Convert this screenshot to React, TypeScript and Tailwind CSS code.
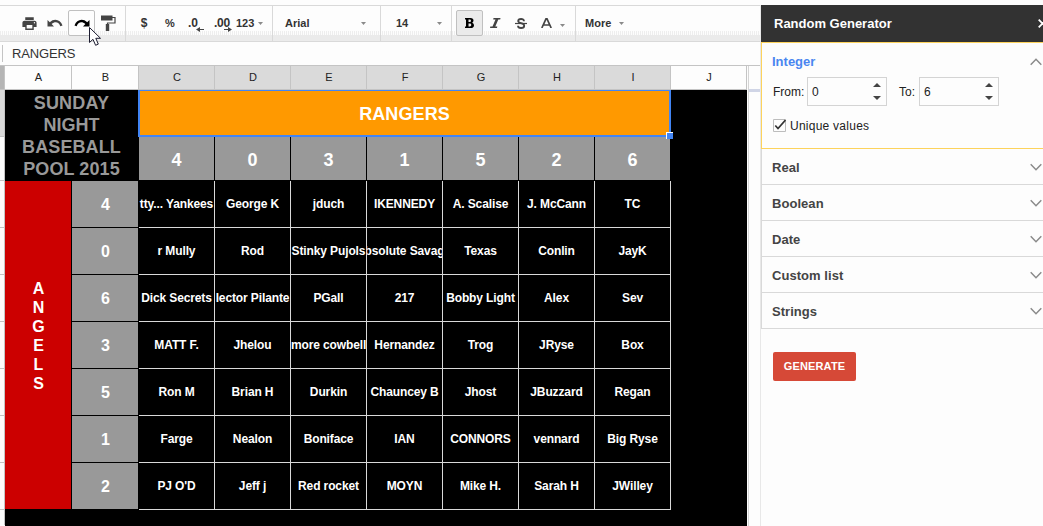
import type { ReactNode } from "react";
import { MdPrint } from "react-icons/md";

const columns = ["C", "D", "E", "F", "G", "H", "I"];
const topDigits = [4, 0, 3, 1, 5, 2, 6];
const rows: { digit: number; names: string[] }[] = [
  { digit: 4, names: ["tty... Yankees", "George K", "jduch", "IKENNEDY", "A. Scalise", "J. McCann", "TC"] },
  { digit: 0, names: ["r Mully", "Rod", "Stinky Pujols", "bsolute Savag", "Texas", "Conlin", "JayK"] },
  { digit: 6, names: ["Dick Secrets", "lector Pilante", "PGall", "217", "Bobby Light", "Alex", "Sev"] },
  { digit: 3, names: ["MATT F.", "Jhelou", "more cowbell", "Hernandez", "Trog", "JRyse", "Box"] },
  { digit: 5, names: ["Ron M", "Brian H", "Durkin", "Chauncey B", "Jhost", "JBuzzard", "Regan"] },
  { digit: 1, names: ["Farge", "Nealon", "Boniface", "IAN", "CONNORS", "vennard", "Big Ryse"] },
  { digit: 2, names: ["PJ O'D", "Jeff j", "Red rocket", "MOYN", "Mike H.", "Sarah H", "JWilley"] },
];

function Caret({ className = "" }: { className?: string }) {
  return (
    <svg className={"shrink-0 " + className} width="5" height="3" viewBox="0 0 5 3">
      <path d="M0 0h5L2.5 3z" fill="#8a8a8a" />
    </svg>
  );
}

function CurvedArrow({ className = "" }: { className?: string }) {
  return (
    <svg className={className} width="16" height="8" viewBox="0 0 16 8">
      <path d="M.5 1v6.500H7L4.600 5C8 2.200 12 3 13.300 7.200L15.500 6.500C13.600.3 7-1.200 2.800 3.200z" fill="currentColor" />
    </svg>
  );
}

function Slot({ children, className = "" }: { children: ReactNode; className?: string }) {
  return <div className={"flex h-[26px] w-[26px] shrink-0 items-center justify-center " + className}>{children}</div>;
}

function Decimals({ label, right }: { label: string; right?: boolean }) {
  return (
    <Slot>
      <span className={right ? "relative text-[12px] tracking-[-0.2px]" : "relative -ml-[6px] text-[12px]"}>
        {label}
        <svg className={right ? "absolute -right-[2px] top-[13px]" : "absolute -right-[6px] top-[13px]"} width="8" height="5" viewBox="0 0 8 5">
          <path d={right ? "M0 2h4V0l4 2.5L4 5V3H0z" : "M8 2H4V0L0 2.5 4 5V3h4z"} fill="#444" />
        </svg>
      </span>
    </Slot>
  );
}

function Toolbar() {
  const group = "flex h-full shrink-0 border-r border-[#d9d9d9] pt-1";
  return (
    <div className="relative flex h-[37px] border-y border-[#d9d9d9] text-[11px] font-bold text-[#333]">
      <div className="absolute inset-x-0 bottom-0 h-[6px] bg-[#ebebeb]" />
      <div className="absolute inset-x-0 bottom-[6px] h-[4px] bg-[linear-gradient(90deg,#e4e4e4_50%,transparent_50%)] bg-[length:2px_2px] opacity-60" />
      <div className="relative flex h-full">
        <div className={group + " w-[126px] pl-4 text-[#444]"}>
          <Slot><MdPrint size={17} /></Slot>
          <Slot><CurvedArrow /></Slot>
          <div className="flex h-[26px] w-[27px] items-center justify-center rounded-[2px] border border-[#c0c0c0] bg-[#fdfdfd] text-black">
            <CurvedArrow className="-scale-x-100" />
          </div>
          <Slot>
            <svg width="15" height="17" viewBox="0 0 15 17">
              <path d="M11 2.500h3V8H6.500v2" fill="none" stroke="#444" strokeWidth="1.200" />
              <path d="M0 .5h11.500v5H0zM4.800 9h3.400V16H4.800z" fill="#444" />
            </svg>
          </Slot>
        </div>
        <div className={group + " w-[147px] pl-[5px]"}>
          <Slot className="text-[12px]">$</Slot>
          <Slot>%</Slot>
          <Decimals label=".0" />
          <Decimals label=".00" right />
          <div className="flex h-[26px] items-center pl-[1px]">123<Caret className="ml-[4px]" /></div>
        </div>
        <div className={group + " w-[108px] justify-between pl-[12px] pr-[14px]"}>
          <span className="flex h-[26px] items-center">Arial</span>
          <span className="flex h-[26px] items-center"><Caret /></span>
        </div>
        <div className={group + " w-[71px] justify-between pl-[15px] pr-[9px]"}>
          <span className="flex h-[26px] items-center">14</span>
          <span className="flex h-[26px] items-center"><Caret /></span>
        </div>
        <div className={group + " w-[124px] pl-1 text-[#444]"}>
          <div className="flex h-[26px] w-[27px] items-center justify-center rounded-[2px] border border-[#c0c0c0] bg-[#ebebeb]">
            <svg width="9" height="10" viewBox="0 0 9 10">
              <path fillRule="evenodd" fill="#000" d="M0 0h5.500Q8.500 0 8.500 2.600 8.500 4.200 7.200 4.800 9 5.400 9 7.200 9 10 5.700 10H0V8.500H1V1.500H0zM3.500 1.600V4H4.800Q6 4 6 2.800 6 1.600 4.800 1.600zM3.500 5.600V8.400H4.900Q6.300 8.400 6.300 7 6.300 5.600 4.900 5.600z" />
            </svg>
          </div>
          <Slot className="-ml-[1px]">
            <svg width="11" height="10" viewBox="0 0 11 10"><path d="M3.500 0H10.500L10.200 1.500H8.300L5.300 8.500H7.300L7 10H0L.3 8.500H2.500L5.500 1.500H3.200z" fill="#444" /></svg>
          </Slot>
          <Slot>
            <svg width="12" height="11" viewBox="0 0 12 11" fill="none" stroke="#444">
              <path d="M9 3.200C9 1.600 7.700 1 6.100 1 4.300 1 3.200 1.700 3.200 3c0 1.300 1.300 1.800 2.800 2.200 2 .5 3.200 1 3.200 2.500C9.200 9.200 8 10 6.100 10 4.200 10 3 9.200 3 7.700" strokeWidth="1.800" />
              <path d="M0 5.500h12" strokeWidth="1.200" />
            </svg>
          </Slot>
          <Slot>
            <svg className="-ml-[2px] -mt-[1px]" width="11" height="10" viewBox="0 0 11 10"><path d="M.8 10L5 .8h1L10.200 10M2.500 7h6" fill="none" stroke="#444" strokeWidth="1.700" /></svg>
          </Slot>
          <div className="flex h-[26px] items-center pt-[4px]"><Caret /></div>
        </div>
        <div className="flex h-[34px] items-center pl-[9px]">More<Caret className="ml-[8px]" /></div>
      </div>
      <svg className="absolute left-[88px] top-[20px] z-20" width="15" height="22" viewBox="0 0 15 22">
        <path d="M1.500 1.500V16.500L5 13.300L7.600 19.300L10.300 18.100L7.800 12.300H12.500z" fill="#fff" stroke="#1c1c30" />
      </svg>
    </div>
  );
}

function HeaderCell({ label, selected, className }: { label: string; selected?: boolean; className: string }) {
  return (
    <div className={"flex h-[24px] shrink-0 items-center justify-center border-b border-r border-[#c4c4c4] pl-[1px] text-[11px] text-[#222] " + className + (selected ? " bg-[#dadada]" : "")}>
      {label}
    </div>
  );
}

function Sheet() {
  return (
    <div className="flex h-[460px] w-[747px] border-t border-[#c4c4c4]">
      <div className="w-[5px] shrink-0 border-r border-[#c4c4c4]">
        <div className="h-[24px] border-b border-[#c4c4c4] bg-[#b5b5b5]" />
        <div className="h-[47px] border-b border-[#c4c4c4] bg-[#dadada]" />
        <div className="h-[44px] border-b border-[#c4c4c4]" />
        {rows.map((row) => <div key={row.digit} className="h-[47px] border-b border-[#c4c4c4]" />)}
      </div>
      <div className="w-[742px]">
        <div className="flex">
          <HeaderCell label="A" className="w-[67px]" />
          <HeaderCell label="B" className="w-[67px]" />
          {columns.map((c) => <HeaderCell key={c} label={c} selected className="w-[76px]" />)}
          <HeaderCell label="J" className="w-[76px]" />
        </div>
        <div className="h-[436px] bg-black font-bold text-white">
          <div className="flex">
            <div className="flex h-[91px] w-[133px] flex-col items-center justify-center text-[18px] leading-[22px] text-[#999]">
              <span className="tracking-[0.2px]">SUNDAY</span><span>NIGHT</span><span className="tracking-[0.1px]">BASEBALL</span><span className="tracking-[0.1px]">POOL 2015</span>
            </div>
            <div className="w-[533px]">
              <div className="relative flex h-[47px] items-center justify-center border-2 border-t border-[#4285f4] bg-[#ff9900] pt-[2px] text-[18px] tracking-[0.1px]">
                RANGERS
                <div className="absolute -bottom-[4px] -right-[4px] z-10 h-[7px] w-[7px] border-l border-t border-white bg-[#4285f4]" />
              </div>
              <div className="flex pl-[1px]">
                {topDigits.map((d) => (
                  <div key={d} className="flex h-[44px] w-[76px] items-center justify-center border-b border-r border-black bg-[#999] pt-[4px] text-[18px]">{d}</div>
                ))}
              </div>
            </div>
          </div>
          <div className="flex">
            <div className="flex h-[329px] w-[67px] flex-col items-center justify-center border-b border-r border-black bg-[#cc0000] pb-[19px] pl-[1px] text-[16px] leading-[19px]">
              {"ANGELS".split("").map((ch) => <span key={ch}>{ch}</span>)}
            </div>
            <div>
              {rows.map((row) => (
                <div key={row.digit} className="flex h-[47px]">
                  <div className="flex h-full w-[67px] shrink-0 items-center justify-center border-b border-r border-black bg-[#999] pl-[1px] pt-[2px] text-[16px]">{row.digit}</div>
                  {row.names.map((name) => (
                    <div key={name} className="flex h-full w-[76px] shrink-0 items-center justify-center overflow-hidden whitespace-nowrap border-b border-r border-[#d9d9d9] text-[12px] tracking-[-0.12px]">{name}</div>
                  ))}
                </div>
              ))}
            </div>
          </div>
        </div>
      </div>
    </div>
  );
}

function Chevron({ up }: { up?: boolean }) {
  return (
    <svg className="shrink-0" width="12" height="8" viewBox="0 0 12 8">
      <path d={up ? "M.7 6.700L6 1.300l5.300 5.400" : "M.7 1.300L6 6.700l5.300-5.400"} fill="none" stroke="#8a8a8a" strokeWidth="1.500" />
    </svg>
  );
}

function NumberField({ value }: { value: number }) {
  return (
    <div className="flex h-[29px] w-[80px] items-center justify-between border border-[#d4d4d4] pl-1 pr-[5px] text-[12px]">
      <span>{value}</span>
      <span className="flex flex-col gap-[9px]">
        <svg width="8" height="4" viewBox="0 0 8 4"><path d="M0 4h8L4 0z" fill="#444" /></svg>
        <svg width="8" height="4" viewBox="0 0 8 4"><path d="M0 0h8L4 4z" fill="#444" /></svg>
      </span>
    </div>
  );
}

function Sidebar() {
  return (
    <div className="mt-[5px] flex h-[521px] w-[282px] flex-col">
      <div className="flex h-[37px] items-center justify-between overflow-hidden bg-[#323232] pl-[13px] text-[13px] font-bold text-white">
        Random Generator
        <svg className="shrink-0" width="5" height="9" viewBox="0 0 5 9"><path d="M.7.7l7.600 7.600M8.300.7L.7 8.300" stroke="#fff" strokeWidth="1.800" /></svg>
      </div>
      <div className="h-[107px] border-y border-l border-[#fdd35c] pl-[10px] text-[12px] text-[#222]">
        <div className="flex h-[34px] items-center justify-between pr-[1px] pt-[3px] text-[13px] font-bold text-[#4a86f0]">Integer<Chevron up /></div>
        <div className="flex items-center pl-[1px]">
          <span className="w-[34px]">From:</span><NumberField value={0} />
          <span className="ml-[12px] w-[20px]">To:</span><NumberField value={6} />
        </div>
        <div className="mt-[12px] flex h-[15px] items-center gap-[4px] pl-[1px]">
          <svg width="13" height="13" viewBox="0 0 13 13"><path d="M.5.5h12v12H.5z" fill="none" stroke="#bdbdbd" /><path d="M2.300 6.500L5 9.500 12.500 1" fill="none" stroke="#333" strokeWidth="1.700" /></svg>
          <span className="tracking-[0.25px]">Unique values</span>
        </div>
      </div>
      {["Real", "Boolean", "Date", "Custom list", "Strings"].map((item) => (
        <div key={item} className="flex h-[36px] items-center justify-between border-b border-l border-[#d9d9d9] pl-[10px] pr-[1px] text-[13px] font-bold tracking-[0.05px] text-[#444]">
          <span className="pt-[2px]">{item}</span><Chevron />
        </div>
      ))}
      <button className="ml-[12px] mt-[23px] h-[29px] w-[83px] rounded-[2px] bg-[#d64937] text-[11px] font-bold tracking-[0.15px] text-white">GENERATE</button>
    </div>
  );
}

export default function App() {
  return (
    <div className="flex h-[526px] w-[1043px] overflow-hidden bg-[#fdfdfd] font-['Liberation_Sans',Arial,sans-serif]">
      <div className="w-[760px] shrink-0 pt-[5px]">
        <Toolbar />
        <div className="flex h-[23px] items-center">
          <div className="ml-[2px] h-[17px] w-px bg-[#c4c4c4]" />
          <span className="ml-[9px] text-[13px] tracking-[-0.15px] text-[#333]">RANGERS</span>
        </div>
        <div className="flex">
          <Sheet />
          <div className="h-[461px] grow border-t border-[#c4c4c4] pl-[1px]">
            <div className="h-full border-l border-[#d4d4d4] pt-[23px]">
              <div className="h-[3px] bg-[#d0d5e6]" />
            </div>
          </div>
        </div>
      </div>
      <div className="mt-[5px] w-px bg-[#e8e8e8]" />
      <Sidebar />
    </div>
  );
}
